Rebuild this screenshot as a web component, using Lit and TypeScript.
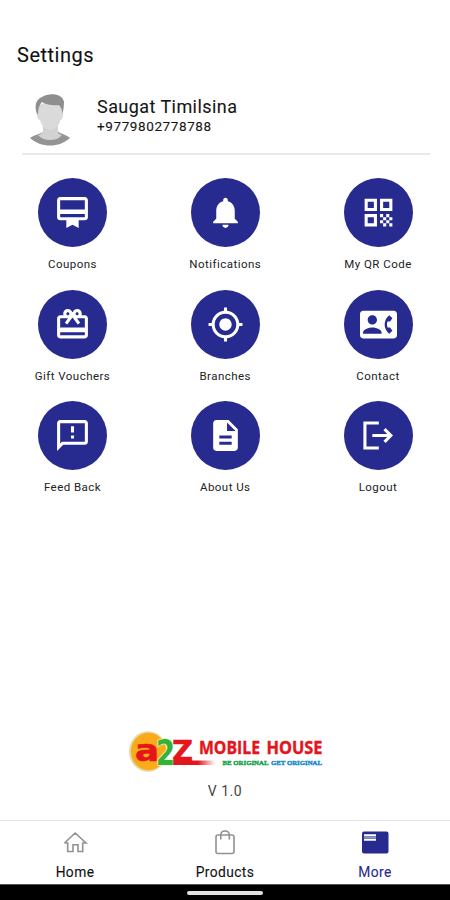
import { LitElement, html, css, svg } from "lit";
import { customElement } from "lit/decorators.js";

const tiles = [
  { label: "Coupons", icon: svg`<path d="M20 2H4c-1.11 0-2 .89-2 2v11c0 1.11.89 2 2 2h4v5l4-2 4 2v-5h4c1.11 0 2-.89 2-2V4c0-1.11-.89-2-2-2zm0 13H4v-2h16v2zm0-5H4V4h16v6z"/>` },
  { label: "Notifications", icon: svg`<path d="M12 22c1.1 0 2-.9 2-2h-4c0 1.1.89 2 2 2zm6-6v-5c0-3.07-1.64-5.64-4.5-6.32V4c0-.83-.67-1.5-1.5-1.5s-1.5.67-1.5 1.5v.68C7.63 5.36 6 7.92 6 11v5l-2 2v1h16v-1l-2-2z"/>` },
  { label: "My QR Code", icon: svg`<path d="M3 11h8V3H3v8zm2-6h4v4H5V5zM3 21h8v-8H3v8zm2-6h4v4H5v-4zM13 3v8h8V3h-8zm6 6h-4V5h4v4zM19 19h2v2h-2zM13 13h2v2h-2zM15 15h2v2h-2zM13 17h2v2h-2zM15 19h2v2h-2zM17 17h2v2h-2zM17 13h2v2h-2zM19 15h2v2h-2z"/>` },
  { label: "Gift Vouchers", icon: svg`<path d="M20 6h-2.18c.11-.31.18-.65.18-1 0-1.66-1.34-3-3-3-1.05 0-1.96.54-2.5 1.35l-.5.67-.5-.68C10.96 2.54 10.05 2 9 2 7.34 2 6 3.34 6 5c0 .35.07.69.18 1H4c-1.11 0-1.99.89-1.99 2L2 19c0 1.11.89 2 2 2h16c1.11 0 2-.89 2-2V8c0-1.11-.89-2-2-2zm-5-2c.55 0 1 .45 1 1s-.45 1-1 1-1-.45-1-1 .45-1 1-1zM9 4c.55 0 1 .45 1 1s-.45 1-1 1-1-.45-1-1 .45-1 1-1zm11 15H4v-2h16v2zm0-5H4V8h5.08L7 10.83 8.62 12 11 8.76l1-1.36 1 1.36L15.38 12 17 10.83 14.92 8H20v6z"/>` },
  { label: "Branches", icon: svg`<path d="M12 8c-2.21 0-4 1.79-4 4s1.79 4 4 4 4-1.79 4-4-1.79-4-4-4zm8.94 3c-.46-4.17-3.77-7.48-7.94-7.94V1h-2v2.06C6.83 3.52 3.52 6.83 3.06 11H1v2h2.06c.46 4.17 3.77 7.48 7.94 7.94V23h2v-2.06c4.17-.46 7.48-3.77 7.94-7.94H23v-2h-2.06zM12 19c-3.87 0-7-3.13-7-7s3.13-7 7-7 7 3.13 7 7-3.13 7-7 7z"/>` },
  { label: "Contact", icon: svg`<path d="M22 3H2C.9 3 0 3.9 0 5v14c0 1.1.9 2 2 2h20c1.1 0 1.99-.9 1.99-2L24 5c0-1.1-.9-2-2-2zM8 6c1.66 0 3 1.34 3 3s-1.34 3-3 3-3-1.34-3-3 1.34-3 3-3zm6 12H2v-1c0-2 4-3.1 6-3.1s6 1.1 6 3.1v1zm3.85-4h1.64L21 16l-1.99 1.99c-1.31-.98-2.28-2.38-2.73-3.99-.18-.64-.28-1.31-.28-2s.1-1.36.28-2c.45-1.62 1.42-3.01 2.73-3.99L21 8l-1.51 2h-1.64c-.22.63-.35 1.3-.35 2s.13 1.37.35 2z"/>` },
  { label: "Feed Back", icon: svg`<path d="M20 2H4c-1.1 0-2 .9-2 2v18l4-4h14c1.1 0 2-.9 2-2V4c0-1.1-.9-2-2-2zm0 14H5.17L4 17.17V4h16v12zm-9-4h2v2h-2zm0-6h2v4h-2z"/>` },
  { label: "About Us", icon: svg`<path d="M14 2H6c-1.1 0-1.99.9-1.99 2L4 20c0 1.1.89 2 1.99 2H18c1.1 0 2-.9 2-2V8l-6-6zm2 16H8v-2h8v2zm0-4H8v-2h8v2zm-3-5V3.5L18.5 9H13z"/>` },
  { label: "Logout", icon: svg`<path fill="none" stroke="#fff" stroke-width="2" d="M12.2 3.9H3.2V20.1H12.2M8 12H20.4M15.900 7.900L20 12L15.900 16.100"/>` },
];

@customElement("app-root")
export class AppRoot extends LitElement {
  static styles = css`
    :host { display: flex; flex-direction: column; box-sizing: border-box; width: 450px; height: 900px; overflow: hidden; background: #fff; color: #161616; font-family: Roboto, sans-serif; }
    h1 { margin: 43px 0 0 17px; font-size: 20px; line-height: 25px; font-weight: 400; letter-spacing: 0.5px; color: #111; -webkit-text-stroke: 0.1px; }
    svg { display: block; flex: none; }
    .profile { display: flex; margin: 23px 20px 0 22px; padding-left: 5px; height: 62px; border-bottom: 2px solid #e9e9e9; }
    .who { margin: 6px 0 0 23px; white-space: nowrap; -webkit-text-stroke: 0.1px; }
    .name { font-size: 18px; line-height: 20px; letter-spacing: 0.44px; }
    .phone { font-size: 13.5px; line-height: 18px; letter-spacing: 0.6px; }
    .grid { display: grid; grid-template-columns: repeat(3, 100px); grid-auto-rows: 111.5px; column-gap: 52.75px; margin: 23px 0 0 22.5px; }
    .tile { display: flex; flex-direction: column; align-items: center; }
    .disc { display: flex; align-items: center; justify-content: center; width: 69px; height: 69px; border-radius: 50%; background: #272a8f; }
    .label { margin-top: 9.4px; font-size: 11.5px; line-height: 16px; letter-spacing: 0.46px; white-space: nowrap; color: #222; }
    .brand { margin: auto 0 0; display: flex; flex-direction: column; align-items: center; }
    .version { font-size: 14px; line-height: 18px; letter-spacing: 0.5px; margin: 7px 0 20px; color: #444; }
    .nav { display: grid; grid-template-columns: repeat(3, 1fr); box-sizing: border-box; height: 64px; border-top: 1px solid #e4e4e4; flex: none; }
    .item { display: flex; flex-direction: column; align-items: center; padding-top: 8px; font-size: 13.8px; line-height: 18px; letter-spacing: 0.4px; color: #111; gap: 6px; -webkit-text-stroke: 0.1px; }
    .active { color: #272a8f; }
    .system { display: flex; align-items: center; justify-content: center; box-sizing: border-box; height: 16px; flex: none; background: #000; border-top: 1px solid #555; padding-top: 1px; }
    .pill { width: 76px; height: 4px; border-radius: 2px; background: #e0e0e0; }
  `;

  render() {
    return html`
      <h1>Settings</h1>
      <section class="profile">
        <svg width="47" height="56" viewBox="0 0 47 56">
          <path fill="#949494" d="M3 47C7 44 14 43 17 40H30C34 43 40 44 43 47C32 57 14 57 3 47Z"/>
          <path fill="#d2d2d2" d="M16 33H31V42Q33 44 35 44Q31 49 23 49Q15 49 11 44Q15 43 16 40Z"/>
          <path fill="#dadada" d="M10 16Q23 6 36 16L35.500 21Q37 22 35.500 27Q34.500 29 33.500 29Q31 38 23.500 39Q15 38 13 29Q11 29 10 25Q9 22 10.500 21Z"/>
          <path fill="#8e8e8e" d="M10 23C7 15 9 8 15 6C23 1 36 3 37 11Q37 17 35.500 23Q35 17 32 14Q22 15 15 11Q11 15 11 23Z"/>
        </svg>
        <div class="who">
          <div class="name">Saugat Timilsina</div>
          <div class="phone">+9779802778788</div>
        </div>
      </section>
      <section class="grid">
        ${tiles.map((t) => html`
          <div class="tile">
            <div class="disc"><svg width="37" height="37" viewBox="0 0 24 24" fill="#fff">${t.icon}</svg></div>
            <div class="label">${t.label}</div>
          </div>`)}
      </section>
      <section class="brand">
        <svg width="210" height="46" viewBox="120 729 210 46">
          <defs>
            <linearGradient id="swoosh"><stop offset="0.6" stop-color="#e4151b"/><stop offset="1" stop-color="#e4151b" stop-opacity="0"/></linearGradient>
          </defs>
          <ellipse cx="148" cy="751.500" rx="19" ry="20.200" fill="#e3d9a4"/>
          <ellipse cx="148.500" cy="751.500" rx="17.500" ry="18.800" fill="#fbaa19"/>
          <path fill="url(#swoosh)" d="M173 760.500H215V765H172Z"/>
          <text x="135" y="760.500" textLength="24" lengthAdjust="spacingAndGlyphs" font-family="DejaVu Sans, sans-serif" font-weight="700" font-size="30" fill="#e4151b" stroke="#e4151b" stroke-width="0.600">a</text>
          <text x="172" y="761" textLength="21" lengthAdjust="spacingAndGlyphs" font-family="DejaVu Sans, sans-serif" font-weight="700" font-size="28" fill="#e4151b" stroke="#e4151b" stroke-width="0.600">Z</text>
          <text x="156" y="765" textLength="19" lengthAdjust="spacingAndGlyphs" font-family="DejaVu Sans, sans-serif" font-weight="700" font-size="36" fill="#32b335" stroke="#e9f3c8" stroke-width="1.500" paint-order="stroke">2</text>
          <text x="199" y="754" textLength="61" lengthAdjust="spacingAndGlyphs" font-family="Open Sans, sans-serif" font-weight="700" font-size="17.800" fill="#e4151b" stroke="#e4151b" stroke-width="0.400">MOBILE</text>
          <text x="266.500" y="754" textLength="56" lengthAdjust="spacingAndGlyphs" font-family="Open Sans, sans-serif" font-weight="700" font-size="17.800" fill="#e4151b" stroke="#e4151b" stroke-width="0.400">HOUSE</text>
          <text x="222.500" y="764.500" textLength="46" lengthAdjust="spacingAndGlyphs" font-family="Liberation Serif, serif" font-weight="700" font-size="7" fill="#12a045" stroke="#12a045" stroke-width="0.4">BE ORIGINAL</text>
          <text x="271" y="764.500" textLength="51" lengthAdjust="spacingAndGlyphs" font-family="Liberation Serif, serif" font-weight="700" font-size="7" fill="#1587c4" stroke="#1587c4" stroke-width="0.4">GET ORIGINAL</text>
        </svg>
        <div class="version">V 1.0</div>
      </section>
      <nav class="nav">
        <div class="item">
          <svg width="28" height="28" viewBox="0 0 28 28" fill="none" stroke="#929292" stroke-width="1.600"><path d="M6.700 13.500V22.500H12V15.800H17V22.500H21.700V13.500M3.500 14L14.200 4L25 14H21.500M3.500 14H7"/></svg>
          <span>Home</span>
        </div>
        <div class="item">
          <svg width="28" height="28" viewBox="0 0 28 28" fill="none" stroke="#929292" stroke-width="1.600"><rect x="5" y="6" width="18" height="18.500" rx="2"/><path d="M9.800 10.500V6Q9.800 2 14 2T18.300 6V10.500"/></svg>
          <span>Products</span>
        </div>
        <div class="item active">
          <svg width="28" height="28" viewBox="0 0 28 28"><rect x="1" y="2.500" width="26.500" height="22" rx="2" fill="#272a8f"/><path d="M3 6.300H15M3 10.700H15" stroke="#fff" stroke-width="2"/><path d="M3 8.500H15" stroke="#8e90c6" stroke-width="2.400"/></svg>
          <span>More</span>
        </div>
      </nav>
      <div class="system"><div class="pill"></div></div>
    `;
  }
}
